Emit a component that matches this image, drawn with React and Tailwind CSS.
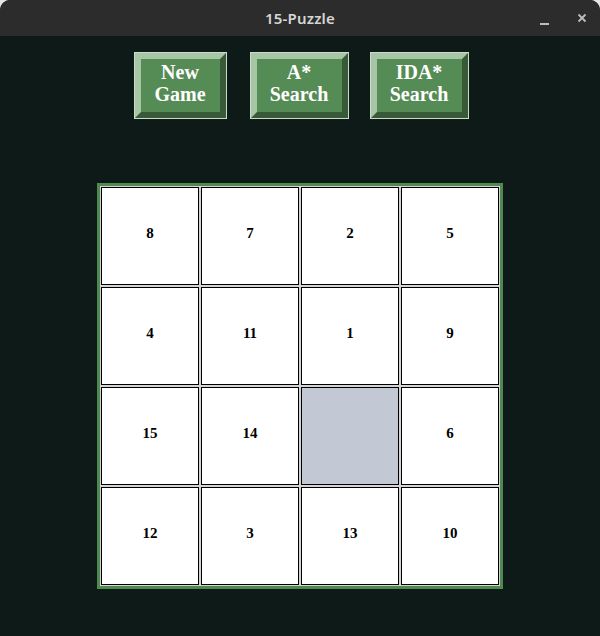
const tiles = [8, 7, 2, 5, 4, 11, 1, 9, 15, 14, null, 6, 12, 3, 13, 10]

function BevelButton({ top, bottom, width }) {
  return (
    <button className={`${width} h-[67px] border border-[#c9dcc9] bg-[#c9dcc9]`}>
      <div className="h-full w-full border-[6px] border-t-[#a6c6a6] border-l-[#a6c6a6] border-b-[#385a38] border-r-[#385a38] bg-[#558b55] flex flex-col items-center justify-center pb-[6px] text-white font-bold text-[20px] leading-[22px] font-['Liberation_Serif',serif]">
        <span>{top}</span>
        <span>{bottom}</span>
      </div>
    </button>
  )
}

export default function App() {
  return (
    <div className="w-[600px] h-[636px] bg-[#e6e6e6] font-['Noto_Sans',sans-serif]">
      <div className="w-full h-full rounded-t-[10px] overflow-hidden flex flex-col bg-[#0d1a18]">
        <div className="h-[36px] bg-[#2c2c2c] flex items-center relative shrink-0">
          <div className="flex-1 text-center text-[15px] font-semibold text-[#d6d6d6] tracking-[0.2px]">15-Puzzle</div>
          <div className="absolute right-0 top-0 h-full flex items-center">
            <svg className="w-[10px] h-[10px] mr-[27px] mt-[5px]" viewBox="0 0 10 10">
              <rect x="0" y="7" width="9" height="2" fill="#bdbdbd" />
            </svg>
            <svg className="w-[10px] h-[10px] mr-[13px]" viewBox="0 0 10 10">
              <path d="M1.5 1.5 L8.5 8.5 M8.5 1.5 L1.5 8.5" stroke="#bdbdbd" strokeWidth="1.8" />
            </svg>
          </div>
        </div>

        <div className="flex flex-col items-center">
          <div className="flex items-start mt-[16px] ml-[2px]">
            <BevelButton top="New" bottom="Game" width="w-[93px]" />
            <div className="w-[23px]" />
            <BevelButton top="A*" bottom="Search" width="w-[99px]" />
            <div className="w-[21px]" />
            <BevelButton top="IDA*" bottom="Search" width="w-[99px]" />
          </div>

          <div className="mt-[64px] w-[406px] h-[406px] border-[3px] border-[#508a50] bg-[#d4d4d4] p-[1px]">
            <div className="grid grid-cols-4 gap-[2px]">
              {tiles.map((n, i) => (
                <div
                  key={i}
                  className={`h-[98px] border border-black flex items-center justify-center pb-[6px] font-['Liberation_Serif',serif] font-bold text-[15px] text-black ${n === null ? 'bg-[#c2c9d4]' : 'bg-white'}`}
                >
                  {n}
                </div>
              ))}
            </div>
          </div>
        </div>
      </div>
    </div>
  )
}
